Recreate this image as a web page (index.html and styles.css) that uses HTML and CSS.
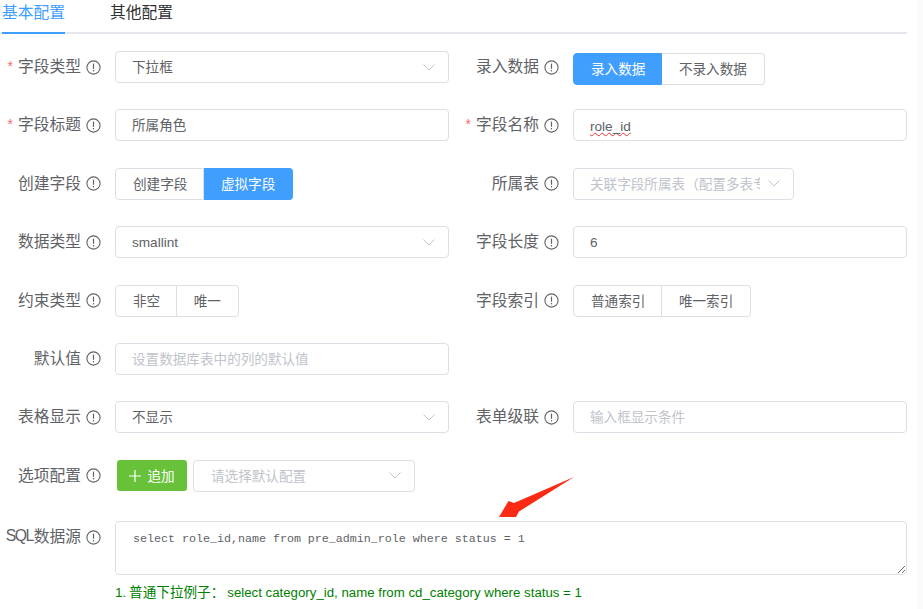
FILE: index.html
```html
<!DOCTYPE html>
<html lang="zh-CN">
<head>
<meta charset="utf-8">
<title>字段配置</title>
<link rel="stylesheet" href="styles.css">
</head>
<body>
<svg class="defs" width="0" height="0" aria-hidden="true">
  <symbol id="info" viewBox="0 0 15 15">
    <circle cx="7.5" cy="7.5" r="6.6" fill="none" stroke="currentColor" stroke-width="1.1"/>
    <path d="M7.5 3.6v5.2" stroke="currentColor" stroke-width="1.2" fill="none"/>
    <path d="M7.5 10v1.4" stroke="currentColor" stroke-width="1.2" fill="none"/>
  </symbol>
  <symbol id="chev" viewBox="0 0 12 7">
    <path d="M.5 .5L6 6l5.5-5.5" fill="none" stroke="currentColor" stroke-width="1"/>
  </symbol>
</svg>
<main class="page">
  <nav class="tabs">
    <span class="tab tab-active">基本配置</span>
    <span class="tab">其他配置</span>
  </nav>
  <form class="form">
    <div class="row">
      <div class="field">
        <label class="label req">字段类型<svg class="info"><use href="#info"/></svg></label>
        <div class="ctl select"><span class="val up">下拉框</span><svg class="chev"><use href="#chev"/></svg></div>
      </div>
      <div class="field">
        <label class="label">录入数据<svg class="info"><use href="#info"/></svg></label>
        <div class="group group-low"><span class="seg seg-on">录入数据</span><span class="seg">不录入数据</span></div>
      </div>
    </div>
    <div class="row">
      <div class="field">
        <label class="label req">字段标题<svg class="info"><use href="#info"/></svg></label>
        <div class="ctl"><span class="val up">所属角色</span></div>
      </div>
      <div class="field">
        <label class="label req">字段名称<svg class="info"><use href="#info"/></svg></label>
        <div class="ctl"><span class="val spell">role_id</span></div>
      </div>
    </div>
    <div class="row">
      <div class="field">
        <label class="label">创建字段<svg class="info"><use href="#info"/></svg></label>
        <div class="group"><span class="seg">创建字段</span><span class="seg seg-on">虚拟字段</span></div>
      </div>
      <div class="field">
        <label class="label">所属表<svg class="info"><use href="#info"/></svg></label>
        <div class="ctl select select-table"><span class="val ph up">关联字段所属表（配置多表专用）</span><svg class="chev"><use href="#chev"/></svg></div>
      </div>
    </div>
    <div class="row">
      <div class="field">
        <label class="label">数据类型<svg class="info"><use href="#info"/></svg></label>
        <div class="ctl select"><span class="val">smallint</span><svg class="chev"><use href="#chev"/></svg></div>
      </div>
      <div class="field">
        <label class="label">字段长度<svg class="info"><use href="#info"/></svg></label>
        <div class="ctl"><span class="val">6</span></div>
      </div>
    </div>
    <div class="row">
      <div class="field">
        <label class="label">约束类型<svg class="info"><use href="#info"/></svg></label>
        <div class="group"><span class="seg">非空</span><span class="seg">唯一</span></div>
      </div>
      <div class="field">
        <label class="label">字段索引<svg class="info"><use href="#info"/></svg></label>
        <div class="group"><span class="seg">普通索引</span><span class="seg">唯一索引</span></div>
      </div>
    </div>
    <div class="row">
      <div class="field">
        <label class="label">默认值<svg class="info"><use href="#info"/></svg></label>
        <div class="ctl"><span class="val ph up">设置数据库表中的列的默认值</span></div>
      </div>
    </div>
    <div class="row">
      <div class="field">
        <label class="label">表格显示<svg class="info"><use href="#info"/></svg></label>
        <div class="ctl select"><span class="val up">不显示</span><svg class="chev"><use href="#chev"/></svg></div>
      </div>
      <div class="field">
        <label class="label">表单级联<svg class="info"><use href="#info"/></svg></label>
        <div class="ctl"><span class="val ph up">输入框显示条件</span></div>
      </div>
    </div>
    <div class="row">
      <div class="field">
        <label class="label">选项配置<svg class="info"><use href="#info"/></svg></label>
        <div class="option-line">
          <button class="add" type="button"><svg class="plus" width="12" height="12" viewBox="0 0 12 12" aria-hidden="true"><path d="M6 0v12M0 6h12" stroke="currentColor" stroke-width="1.2" fill="none"/></svg><span class="up">追加</span></button>
          <div class="ctl select select-default"><span class="val ph up">请选择默认配置</span><svg class="chev"><use href="#chev"/></svg></div>
        </div>
      </div>
    </div>
    <div class="field field-sql">
      <label class="label"><span class="sql-word">SQL</span>数据源<svg class="info"><use href="#info"/></svg></label>
      <div class="sql-body">
        <textarea class="sql" spellcheck="false">select role_id,name from pre_admin_role where status = 1</textarea>
        <p class="help"><span class="help-key">1. 普通下拉例子：</span><span class="help-code">select category_id, name from cd_category where status = 1</span></p>
      </div>
    </div>
  </form>
  <svg class="arrow" width="90" height="50" viewBox="0 0 90 50" aria-hidden="true">
    <path d="M75 0L15 26 9.5 24 0 40H17L20 34.5Z" fill="#fb2a14"/>
  </svg>
</main>
</body>
</html>
```
FILE: styles.css
```css
* { box-sizing: border-box; }
html, body { margin: 0; padding: 0; background: #fff; }
body {
  font-family: "Liberation Sans", "Noto Sans CJK SC", sans-serif;
  font-size: 13.6px;
  color: #606266;
  overflow: hidden;
}
.defs { position: absolute; }
.page {
  position: relative;
  width: 923px;
  height: 609px;
  overflow: hidden;
  background: linear-gradient(to right, #fff 917px, #fbfbfb 917px);
}
.tabs {
  width: 907px;
  height: 34px;
  border-bottom: 2px solid #e4e7ed;
  display: flex;
  gap: 45px;
  padding-left: 2px;
}
.tab {
  height: 34px;
  line-height: 25px;
  font-size: 15.75px;
  color: #303133;
}
.tab-active {
  color: #409eff;
  border-bottom: 2px solid #409eff;
}
.form { width: 907px; padding-top: 17px; }
.row {
  display: grid;
  grid-template-columns: 449px 449px;
  column-gap: 9px;
  height: 58.4px;
}
.field { display: grid; grid-template-columns: 115px 1fr; align-items: start; }
.label {
  position: relative;
  display: flex;
  justify-content: flex-end;
  align-items: center;
  height: 29px;
  padding-right: 14px;
  font-size: 15.75px;
  color: #606266;
  white-space: nowrap;
}
.req::before {
  content: "*";
  color: #f56c6c;
  font-size: 14px;
  margin-right: 5px;
  line-height: 14px;
}
.info { width: 15px; height: 15px; margin: 3px 0 0 5px; color: #606266; flex: none; }
.sql-word { letter-spacing: -1.5px; margin-right: 1px; }
.ctl {
  height: 32px;
  border: 1px solid #dcdfe6;
  border-radius: 4px;
  display: flex;
  align-items: center;
  padding: 0 16px;
  background: #fff;
  min-width: 0;
}
.val { color: #606266; white-space: nowrap; overflow: hidden; flex: 1; }
.up { padding-bottom: 2px; }
.ph { color: #c0c4cc; }
.spell {
  flex: none;
  overflow: visible;
  padding-top: 2px;
  text-decoration: underline wavy #f03030 1px;
  text-underline-offset: 1px;
}
.select { justify-content: space-between; padding-right: 13px; }
.chev { width: 12px; height: 7px; color: #c0c4cc; flex: none; margin-left: 8px; }
.select-table { width: 221px; }
.select-default { width: 222px; padding-left: 17px; }
.group { display: inline-flex; justify-self: start; height: 32px; }
.group-low { margin-top: 2px; }
.seg {
  display: flex;
  align-items: center;
  padding: 0 17px 2px;
  border: 1px solid #dcdfe6;
  border-left: 0;
  color: #606266;
  white-space: nowrap;
}
.seg:first-child {
  border-left: 1px solid #dcdfe6;
  border-radius: 4px 0 0 4px;
  padding-right: 15.5px;
}
.seg:last-child { border-radius: 0 4px 4px 0; }
.seg-on { background: #409eff; border-color: #409eff; color: #fff; }
.seg:first-child.seg-on { border-left-color: #409eff; }
.option-line { display: flex; align-items: center; gap: 6px; padding-left: 2px; }
.add {
  width: 70px;
  height: 31px;
  border: 0;
  border-radius: 3px;
  background: #67c23a;
  color: #fff;
  font: inherit;
  display: flex;
  align-items: center;
  justify-content: center;
  padding: 0;
}
.plus { margin-right: 6px; }
.field-sql { padding-top: 3px; }
.sql-body { min-width: 0; }
.sql {
  display: block;
  width: 792px;
  height: 54px;
  border: 1px solid #dcdfe6;
  border-radius: 4px;
  padding: 9px 17px;
  font-family: "Liberation Mono", monospace;
  font-size: 11.67px;
  line-height: 16px;
  color: #606266;
  resize: both;
  outline: 0;
}
.help { margin: 8px 0 0; color: #008000; line-height: 20px; white-space: nowrap; }
.help-key { margin-right: 3px; word-spacing: -1px; }
.help-code { font-size: 13.25px; }
.arrow { position: absolute; left: 499px; top: 477px; }
```
